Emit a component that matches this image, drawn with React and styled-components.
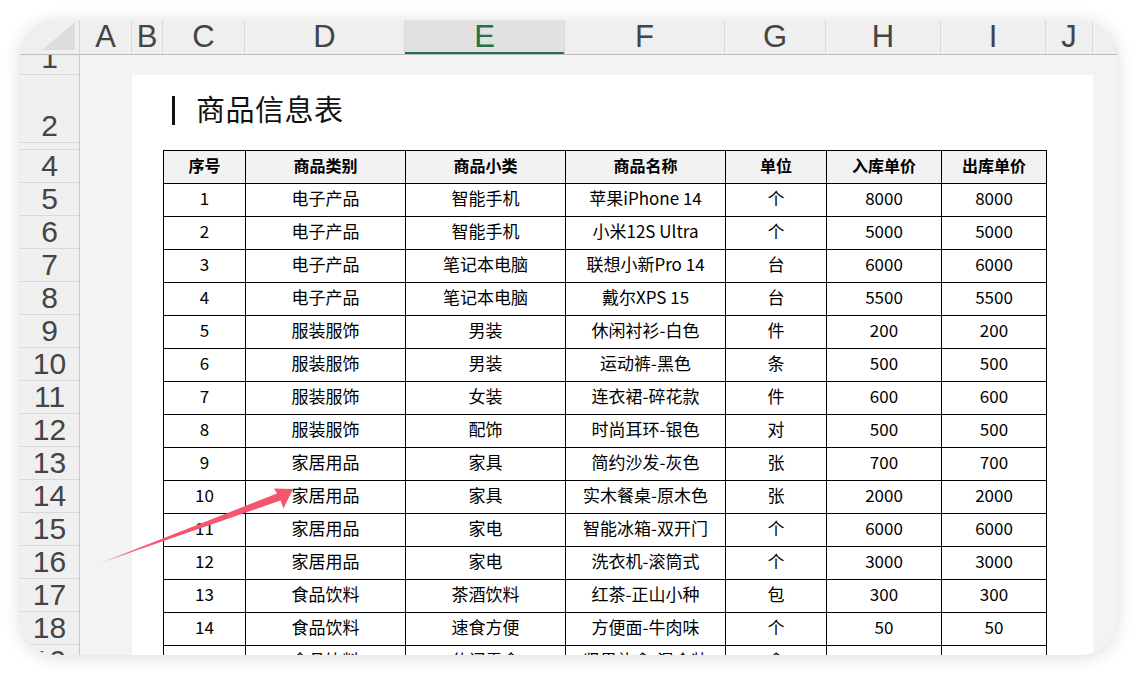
import React from 'react'
import styled, { createGlobalStyle } from 'styled-components'

const GlobalStyle = createGlobalStyle`
  html, body {
    margin: 0;
    padding: 0;
    background: #fff;
  }
  body {
    font-family: 'Noto Sans CJK SC', 'Noto Sans', sans-serif;
  }
`

const columns = [
  { key: 'A', width: 52 },
  { key: 'B', width: 31 },
  { key: 'C', width: 82 },
  { key: 'D', width: 160 },
  { key: 'E', width: 160, selected: true },
  { key: 'F', width: 160 },
  { key: 'G', width: 101 },
  { key: 'H', width: 115 },
  { key: 'I', width: 105 },
  { key: 'J', width: 47 },
  { key: '', width: 24 },
]

const rowHeads = [
  { label: '1', height: 20 },
  { label: '2', height: 68 },
  { label: '', height: 7 },
  ...Array.from({ length: 16 }, (_, i) => ({ label: String(i + 4), height: 33 })),
]

const headers = ['序号', '商品类别', '商品小类', '商品名称', '单位', '入库单价', '出库单价']

const rows = [
  [1, '电子产品', '智能手机', '苹果iPhone 14', '个', 8000, 8000],
  [2, '电子产品', '智能手机', '小米12S Ultra', '个', 5000, 5000],
  [3, '电子产品', '笔记本电脑', '联想小新Pro 14', '台', 6000, 6000],
  [4, '电子产品', '笔记本电脑', '戴尔XPS 15', '台', 5500, 5500],
  [5, '服装服饰', '男装', '休闲衬衫-白色', '件', 200, 200],
  [6, '服装服饰', '男装', '运动裤-黑色', '条', 500, 500],
  [7, '服装服饰', '女装', '连衣裙-碎花款', '件', 600, 600],
  [8, '服装服饰', '配饰', '时尚耳环-银色', '对', 500, 500],
  [9, '家居用品', '家具', '简约沙发-灰色', '张', 700, 700],
  [10, '家居用品', '家具', '实木餐桌-原木色', '张', 2000, 2000],
  [11, '家居用品', '家电', '智能冰箱-双开门', '个', 6000, 6000],
  [12, '家居用品', '家电', '洗衣机-滚筒式', '个', 3000, 3000],
  [13, '食品饮料', '茶酒饮料', '红茶-正山小种', '包', 300, 300],
  [14, '食品饮料', '速食方便', '方便面-牛肉味', '个', 50, 50],
  [15, '食品饮料', '休闲零食', '坚果礼盒-混合装', '盒', 150, 150],
]

const Page = styled.div`
  position: relative;
  width: 1137px;
  height: 676px;
  padding: 20px 0 0 20px;
  box-sizing: border-box;
  overflow: hidden;
`

const Card = styled.div`
  width: 1097px;
  height: 635px;
  border-radius: 36px;
  overflow: hidden;
  background: #f3f3f3;
  box-shadow: 0 2px 18px rgba(0, 0, 0, 0.14);
  display: grid;
  grid-template-columns: 60px 1fr;
  grid-template-rows: 35px 1fr;
`

const Corner = styled.div`
  display: flex;
  justify-content: flex-end;
  align-items: flex-end;
  padding: 0 4px 4px 0;
  box-sizing: border-box;
  background: #efefef;
  border-right: 1px solid #d6d6d6;
  border-bottom: 1px solid #bdbdbd;
`

const SelectAll = styled.div`
  width: 0;
  height: 0;
  border-left: 33px solid transparent;
  border-bottom: 28px solid #dcdcdc;
`

const ColHeader = styled.div`
  display: flex;
  background: #efefef;
  border-bottom: 1px solid #bdbdbd;
`

const ColCell = styled.div`
  flex: 0 0 ${p => p.$w}px;
  box-sizing: border-box;
  border-right: 1px solid #d9d9d9;
  text-align: center;
  font-family: 'Liberation Sans', Arial, sans-serif;
  font-size: 31px;
  line-height: 34px;
  color: ${p => p.$selected ? '#217346' : '#444'};
  background: ${p => p.$selected ? '#e1e1e1' : 'transparent'};
  box-shadow: ${p => p.$selected ? 'inset 0 -2px 0 #217346' : 'none'};
`

const RowHeader = styled.div`
  display: flex;
  flex-direction: column;
  background: #efefef;
  border-right: 1px solid #c8c8c8;
  overflow: hidden;
`

const RowCell = styled.div`
  flex: 0 0 ${p => p.$h}px;
  box-sizing: border-box;
  display: flex;
  justify-content: center;
  align-items: flex-end;
  overflow: hidden;
  border-bottom: 1px solid #d9d9d9;
  font-family: 'Liberation Sans', Arial, sans-serif;
  font-size: 30px;
  line-height: 32px;
  color: #444;
`

const Sheet = styled.div`
  display: flex;
  padding: 20px 0 0 52px;
  overflow: hidden;
`

const Canvas = styled.div`
  width: 961px;
  background: #fff;
  padding-left: 31px;
  box-sizing: border-box;
  display: flex;
  flex-direction: column;
`

const TitleRow = styled.div`
  flex: 0 0 75px;
  box-sizing: border-box;
  display: flex;
  align-items: center;
  padding: 0 0 9px 9px;
`

const TitleBar = styled.div`
  width: 3px;
  height: 29px;
  background: #111;
  margin: 4px 21px 0 0;
`

const Title = styled.div`
  font-size: 29px;
  color: #111;
  letter-spacing: 0.5px;
`

const Table = styled.div`
  display: grid;
  grid-template-columns: 82px 160px 160px 160px 101px 115px 105px;
  grid-auto-rows: 33px;
  border-left: 1px solid #000;
  border-top: 1px solid #000;
  align-self: flex-start;
`

const Cell = styled.div`
  box-sizing: border-box;
  border-right: 1px solid #000;
  border-bottom: 1px solid #000;
  display: flex;
  align-items: center;
  justify-content: center;
  padding-bottom: 5px;
  white-space: nowrap;
  color: #000;
  font-size: ${p => p.$head ? '16px' : '17px'};
  font-weight: ${p => p.$head ? 700 : 400};
  background: ${p => p.$head ? '#f2f2f2' : '#fff'};
`

const ArrowLayer = styled.svg`
  position: absolute;
  left: 0;
  top: 0;
  pointer-events: none;
`

export default function App() {
  return (
    <>
      <GlobalStyle />
      <Page>
        <Card>
          <Corner>
            <SelectAll />
          </Corner>
          <ColHeader>
            {columns.map((c, i) => (
              <ColCell key={i} $w={c.width} $selected={c.selected}>{c.key}</ColCell>
            ))}
          </ColHeader>
          <RowHeader>
            {rowHeads.map((r, i) => (
              <RowCell key={i} $h={r.height}>{r.label}</RowCell>
            ))}
          </RowHeader>
          <Sheet>
            <Canvas>
              <TitleRow>
                <TitleBar />
                <Title>商品信息表</Title>
              </TitleRow>
              <Table>
                {headers.map(h => <Cell key={h} $head>{h}</Cell>)}
                {rows.map(r => r.map((v, j) => (
                  <Cell key={r[0] + '-' + j}>{v}</Cell>
                )))}
              </Table>
            </Canvas>
          </Sheet>
        </Card>
        <ArrowLayer width="1137" height="676" viewBox="0 0 1137 676">
          <polygon
            points="103,562 277,493.5 274,488.5 293,489 283.5,508.5 280.5,500.5"
            fill="#f4566e"
          />
        </ArrowLayer>
      </Page>
    </>
  )
}
